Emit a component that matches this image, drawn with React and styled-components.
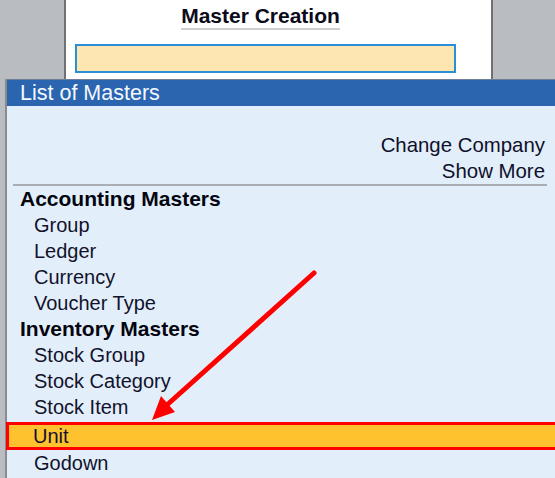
import React from 'react'
import styled, { createGlobalStyle } from 'styled-components';

const GlobalStyle = createGlobalStyle`
html,body{
margin:0;
padding:0;
}
body{
font-family:"Liberation Sans", Arial, sans-serif;
}
`;

const Page = styled.div`
position:relative;
width:555px;
height:478px;
overflow:hidden;
background:#b9bcc0;
`;

const TopPanel = styled.div`
margin-left:64px;
width:429px;
height:79px;
box-sizing:border-box;
background:#fff;
border-left:2px solid #717171;
border-right:2px solid #717171;
padding-left:9px;
display:flex;
flex-direction:column;
align-items:flex-start;
`;

const TitleRow = styled.div`
width:381px;
padding-right:10px;
box-sizing:border-box;
display:flex;
justify-content:center;
padding-top:4px;
`;

const Title = styled.div`
font-size:21px;
font-weight:bold;
line-height:24px;
color:#0b0b1a;
border-bottom:2px solid #cfcfcf;
`;

const NameInput = styled.div`
margin-top:14px;
width:381px;
height:29px;
box-sizing:border-box;
border:2px solid #2b8fd6;
background:#fde6b2;
`;

const ListPanel = styled.div`
margin-left:5px;
height:399px;
border-left:2px solid #8a8a8a;
background:#e2effa;
display:flex;
flex-direction:column;
`;

const Header = styled.div`
height:27px;
box-sizing:border-box;
border-top:1px solid #6d7f99;
background:#2b65af;
color:#f4f8ff;
font-size:21.5px;
line-height:26px;
padding-left:13px;
`;

const Links = styled.div`
padding-top:26px;
padding-right:10px;
display:flex;
flex-direction:column;
align-items:flex-end;
`;

const Link = styled.div`
font-size:20.4px;
line-height:26px;
height:26px;
color:#10102a;
`;

const Separator = styled.div`
margin-left:6px;
margin-right:8px;
height:2px;
background:#a9aeb3;
`;

const Row = styled.div`
height:${p => (p.$selected ? '28px' : '26px')};
margin-top:${p => (p.$selected ? '2px' : '0')};
box-sizing:border-box;
display:flex;
align-items:center;
padding-left:${p => (p.$group ? '13px' : p.$selected ? '24px' : '27px')};
font-size:${p => (p.$group ? '21px' : '20px')};
font-weight:${p => (p.$group ? 'bold' : 'normal')};
color:${p => (p.$group ? '#050510' : '#12122c')};
background:${p => (p.$selected ? '#fec22f' : 'transparent')};
border:${p => (p.$selected ? '3px solid #ff0000' : 'none')};
border-right:none;
margin-left:${p => (p.$selected ? '-1px' : '0')};
`;

const ArrowLayer = styled.svg`
position:absolute;
left:0;
top:0;
pointer-events:none;
`;

const items = [
  { label: 'Accounting Masters', group: true },
  { label: 'Group' },
  { label: 'Ledger' },
  { label: 'Currency' },
  { label: 'Voucher Type' },
  { label: 'Inventory Masters', group: true },
  { label: 'Stock Group' },
  { label: 'Stock Category' },
  { label: 'Stock Item' },
  { label: 'Unit', selected: true },
  { label: 'Godown' },
];

const App = () => {
  return (
    <Page>
      <GlobalStyle />
      <TopPanel>
        <TitleRow>
          <Title>Master Creation</Title>
        </TitleRow>
        <NameInput />
      </TopPanel>
      <ListPanel>
        <Header>List of Masters</Header>
        <Links>
          <Link>Change Company</Link>
          <Link>Show More</Link>
        </Links>
        <Separator />
        {items.map(item => (
          <Row key={item.label} $group={item.group} $selected={item.selected}>
            {item.label}
          </Row>
        ))}
      </ListPanel>
      <ArrowLayer width="555" height="478" viewBox="0 0 555 478">
        <line x1="314" y1="273" x2="168" y2="404" stroke="#ff0000" strokeWidth="5" strokeLinecap="round" />
        <polygon points="152,420 175,412 161,396" fill="#ff0000" />
      </ArrowLayer>
    </Page>
  )
}
export default App;
